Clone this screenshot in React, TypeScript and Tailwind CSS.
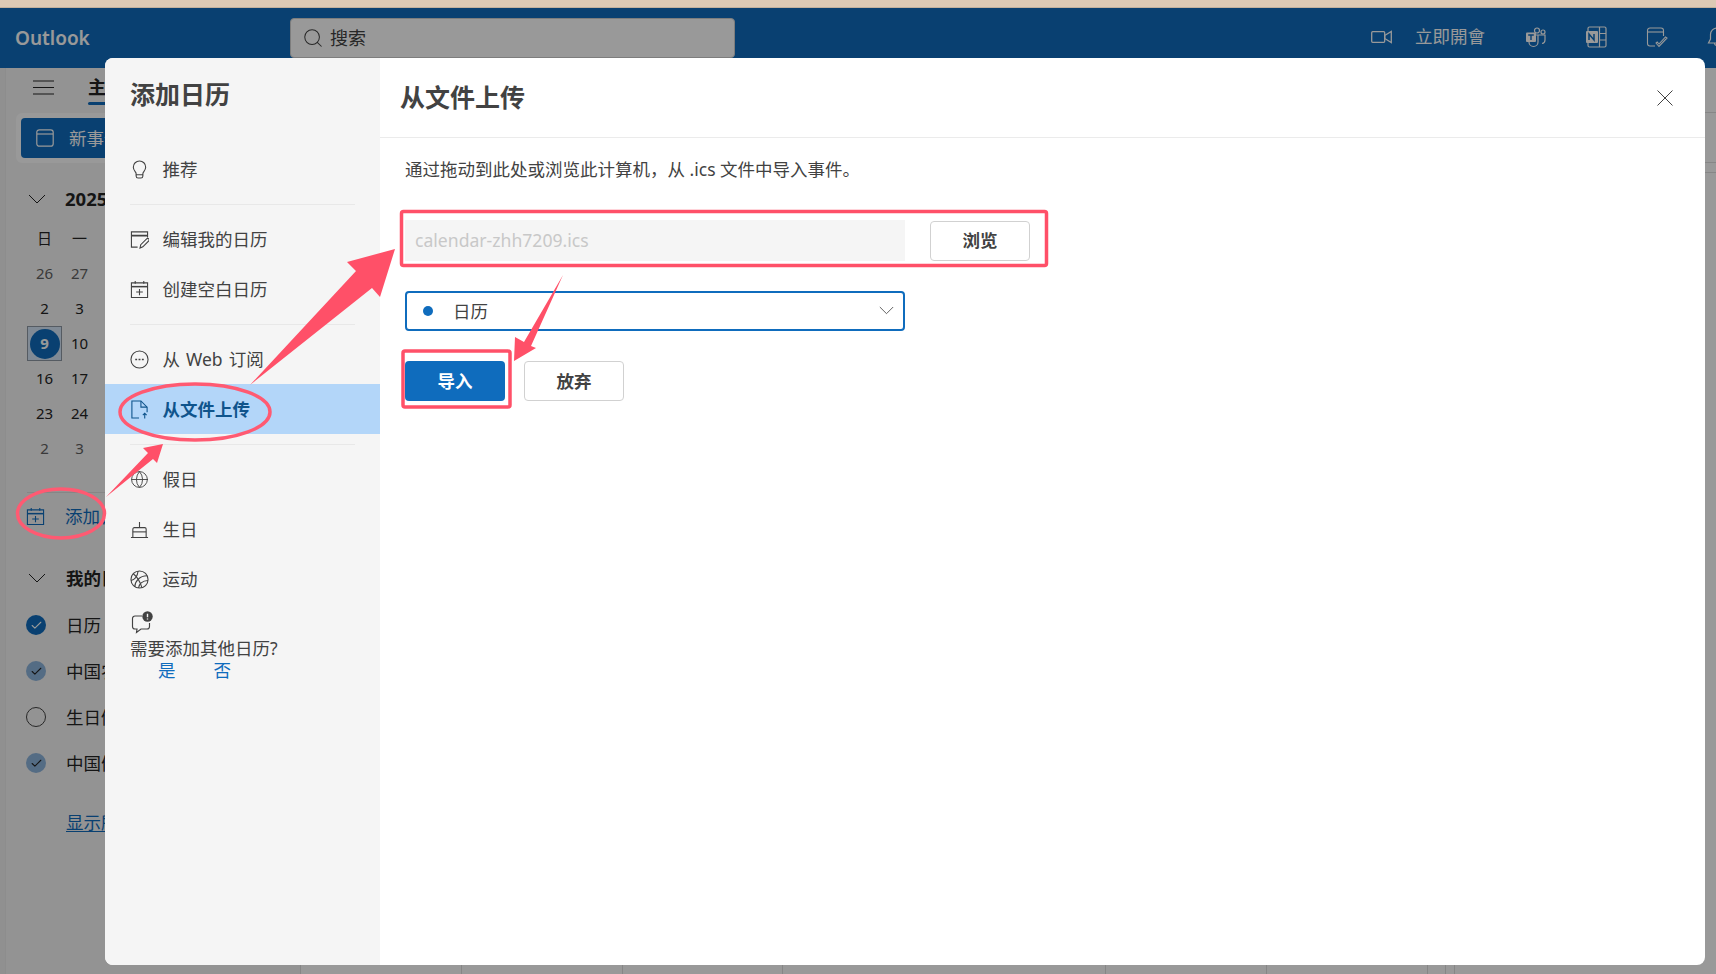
import React from "react";
import { Check, Search, Globe } from "lucide-react";

const FONT = "font-['Noto_Sans','Noto_Sans_CJK_SC',sans-serif]";

// --- Icônes dessinées ---
const IconProps = {
  width: 19,
  height: 19,
  viewBox: "0 0 20 20",
  fill: "none",
  stroke: "currentColor",
  strokeWidth: 1.15,
};

const Chevron = ({ width }: { width: number }) => (
  <svg width={width} height={width / 2 + 2} viewBox="0 0 18 11" fill="none" stroke="currentColor" strokeWidth={1}>
    <path d="M1 1l8 8 8-8" />
  </svg>
);

const Bulb = () => (
  <svg {...IconProps}>
    <path d="M10 1a6.500 6.500 0 0 0-6.500 6.500c0 2.500 1.500 4 2.500 5.500.5.800.5 1.500.5 2.500h7c0-1 0-1.700.5-2.500 1-1.500 2.500-3 2.500-5.500A6.500 6.500 0 0 0 10 1z" />
    <path d="M6.500 15.500V17a2 2 0 0 0 2 2h3a2 2 0 0 0 2-2v-1.500" />
  </svg>
);

const CalendarEdit = () => (
  <svg {...IconProps}>
    <path d="M8 18H1.500V2h17v6" />
    <path d="M1.500 6h17" strokeWidth={1.8} />
    <path d="M10.500 19l.8-3.500 6.200-6.200a1.500 1.500 0 0 1 2.200 2.200l-6.200 6.200z" />
  </svg>
);

const CalendarAdd = () => (
  <svg {...IconProps}>
    <path d="M1.500 3h17v15.500h-17z" />
    <path d="M1.500 7h17" strokeWidth={1.6} />
    <path d="M10 9.500v6.500M6.500 12.700h7M5.500 1v3M14.500 1v3" />
  </svg>
);

const WebSub = () => (
  <svg {...IconProps}>
    <circle cx="10" cy="10" r="9" />
    <path d="M5.500 10h2M9 10h2M12.500 10h2" strokeWidth={1.4} />
  </svg>
);

const FileUpload = () => (
  <svg {...IconProps}>
    <path d="M9.500 19H2V1h9.500L18 7.500V13" />
    <path d="M11.500 1v6.500H18" />
    <path d="M15.500 19.500v-5M13.500 16l2-2 2 2" />
  </svg>
);

const Cake = () => (
  <svg {...IconProps}>
    <path d="M10 2v5.500M1 18.500h18M3 18.500v-9a1.500 1.500 0 0 1 1.500-1.500h11a1.500 1.500 0 0 1 1.500 1.500v9" />
    <path d="M3 12.500h14" />
  </svg>
);

const Sports = () => (
  <svg {...IconProps}>
    <circle cx="10" cy="10" r="9" />
    <path d="M1 11c4-1 7-5 7.500-10M5 18c0-6 5-12 13-12M9 19c0-4 4-8 10-8" />
    <path d="M3.500 4c2.500 2 7 8 9 14.500" />
  </svg>
);

const ChatAlert = () => (
  <svg width="24" height="24" viewBox="0 0 24 24" fill="none" stroke="currentColor" strokeWidth={1.15}>
    <path d="M12 5H5a2.500 2.500 0 0 0-2.500 2.500v8A2.500 2.500 0 0 0 5 18h2l-.5 3.500L11 18h6a2.500 2.500 0 0 0 2.500-2.500V12" />
    <circle cx="17.500" cy="5.500" r="5.200" fill="currentColor" stroke="none" />
    <path d="M17.500 2.800v3.400M17.500 7.400v1.100" stroke="#f5f5f5" strokeWidth={1.4} />
  </svg>
);

const VideoCam = () => (
  <svg width="21" height="14" viewBox="0 0 21 14" fill="none" stroke="currentColor" strokeWidth={1.3}>
    <rect x="0.700" y="1.700" width="13" height="10.600" rx="1" />
    <path d="M13.700 5.500L20.300 1.500v11l-6.600-4z" />
  </svg>
);

const Teams = () => (
  <svg width="22" height="22" viewBox="0 0 22 22" fill="none" stroke="currentColor" strokeWidth={1.2}>
    <circle cx="12" cy="4.500" r="2.500" />
    <circle cx="18" cy="6" r="2" />
    <path d="M12 9h8v5a3.500 3.500 0 0 1-3 3.500M8 9h5v7a4.500 4.500 0 0 1-9 0" />
    <rect x="1" y="6.500" width="10" height="9.500" rx="1" fill="currentColor" stroke="none" />
    <path d="M3.200 9h5.600M6 9v5" stroke="#0f6cbd" strokeWidth={1.4} />
  </svg>
);

const OneNote = () => (
  <svg width="22" height="22" viewBox="0 0 22 22" fill="none" stroke="currentColor" strokeWidth={1.2}>
    <rect x="3" y="1" width="18" height="20" rx="1.500" />
    <path d="M14.500 1v20M14.500 7.500H21M14.500 14H21" />
    <rect x="1" y="5" width="12" height="12" rx="1" fill="currentColor" stroke="none" />
    <path d="M4 14V8l5 6V8" stroke="#0f6cbd" strokeWidth={1.5} />
  </svg>
);

const TodoCalendar = () => (
  <svg width="22" height="22" viewBox="0 0 22 22" fill="none" stroke="currentColor" strokeWidth={1.1}>
    <path d="M9 20H4a2.500 2.500 0 0 1-2.500-2.500v-13A2.500 2.500 0 0 1 4 2h11a2.500 2.500 0 0 1 2.500 2.500V10" />
    <path d="M1.500 6h16" />
    <path d="M10 17l3 3.500 8-8.500-1.500-1-6.500 7-1.800-2z" />
  </svg>
);

const Bell = () => (
  <svg width="22" height="22" viewBox="0 0 22 22" fill="none" stroke="currentColor" strokeWidth={1.2}>
    <path d="M11 2a6.500 6.500 0 0 0-6.500 6.500V13L2.500 17h17l-2-4V8.500A6.500 6.500 0 0 0 11 2z" />
    <path d="M8.500 17a2.500 2.500 0 0 0 5 0" />
  </svg>
);

// --- Données ---
const CALENDAR_WEEKS = [
  ["26", "27"],
  ["2", "3"],
  ["9", "10"],
  ["16", "17"],
  ["23", "24"],
  ["2", "3"],
];

const MY_CALENDARS = [
  { label: "日历", state: "on" },
  { label: "中国农历", state: "soft" },
  { label: "生日储存", state: "off" },
  { label: "中国假日", state: "soft" },
];

const NAV_GROUPS = [
  [{ icon: <Bulb />, label: "推荐" }],
  [
    { icon: <CalendarEdit />, label: "编辑我的日历" },
    { icon: <CalendarAdd />, label: "创建空白日历" },
  ],
  [
    { icon: <WebSub />, label: "从 Web 订阅" },
    { icon: <FileUpload />, label: "从文件上传", active: true },
  ],
  [
    { icon: <Globe size={19} strokeWidth={1.15} />, label: "假日" },
    { icon: <Cake />, label: "生日" },
    { icon: <Sports />, label: "运动" },
  ],
];

const Sidebar = () => (
  <aside className="w-[300px] shrink-0 bg-[#f5f5f5] flex">
    <div className="w-[6px] shrink-0 bg-[#f0f0f0] border-r border-[#ebebeb]" />
    <div className="flex-1 pr-4 text-[#242424]">
      <div className="h-[39px] mb-[6px] flex items-center pl-[27px] gap-[34px]">
        <svg width="21" height="15" viewBox="0 0 21 15" fill="none" stroke="currentColor" strokeWidth={1.2}>
          <path d="M0 1h21M0 7.500h21M0 14h21" />
        </svg>
        <div className="relative text-[18px] font-bold">
          主页
          <div className="absolute left-0 right-0 -bottom-[4px] h-[3px] rounded bg-[#0f6cbd]" />
        </div>
      </div>
      <div className="ml-[10px] h-[50px] w-[200px] rounded-md bg-white p-[5px]">
        <div className="h-full rounded bg-[#0f6cbd] flex items-center pl-[15px] gap-[15px] text-white text-[17.5px]">
          <svg width="18" height="18" viewBox="0 0 18 18" fill="none" stroke="currentColor" strokeWidth={1.2}>
            <rect x="0.800" y="0.800" width="16.400" height="16.400" rx="2.500" />
            <path d="M1 5h16" />
          </svg>
          新事件
        </div>
      </div>
      <div className="h-[36px] mt-[18px] flex items-center pl-[22px] gap-[19px]">
        <Chevron width={18} />
        <span className="text-[18.5px] font-bold">2025年2月</span>
      </div>
      <div className="ml-[21px] mt-[4px] grid grid-cols-[35px_35px] auto-rows-[35px] text-[15px] text-center">
        <div className="flex items-center justify-center">日</div>
        <div className="flex items-center justify-center">一</div>
        {CALENDAR_WEEKS.map((week, row) =>
          week.map((day, col) =>
            row === 2 && col === 0 ? (
              <div key="today" className="bg-[#d5e7f8] border border-[#242424]/40 flex items-center justify-center">
                <div className="w-[30px] h-[30px] rounded-full bg-[#0f6cbd] text-white font-bold flex items-center justify-center">
                  {day}
                </div>
              </div>
            ) : (
              <div
                key={`${row}-${col}`}
                className={`flex items-center justify-center ${row === 0 || row === 5 ? "text-[#616161]" : ""}`}
              >
                {day}
              </div>
            ),
          ),
        )}
      </div>
      <div className="ml-[21px] mt-[26px] border-t border-[#e0e0e0]" />
      <div className="h-[46px] flex items-center pl-[20px] gap-[20px] text-[#0f6cbd] text-[17.5px]">
        <CalendarAdd />
        添加日历
      </div>
      <div className="h-[40px] mt-[19px] flex items-center pl-[22px] gap-[20px]">
        <Chevron width={18} />
        <span className="text-[17.5px] font-bold">我的日历</span>
      </div>
      <div className="mt-[4px] flex flex-col">
        {MY_CALENDARS.map((cal) => (
          <div key={cal.label} className="h-[46px] flex items-center pl-[20px] gap-[20px] text-[17.5px]">
            {cal.state === "off" ? (
              <div className="w-5 h-5 rounded-full border border-[#424242]" />
            ) : (
              <div
                className={`w-5 h-5 rounded-full flex items-center justify-center ${cal.state === "on" ? "bg-[#0f6cbd] text-white" : "bg-[#8db4dc] text-[#242424]"}`}
              >
                <Check size={13} strokeWidth={2} />
              </div>
            )}
            {cal.label}
          </div>
        ))}
      </div>
      <div className="mt-[23px] pl-[60px] text-[#0f6cbd] text-[17.5px] underline underline-offset-2">显示所有</div>
    </div>
  </aside>
);

const CalendarGrid = () => (
  <main className="flex-1 bg-white flex flex-col">
    <div className="h-[45px] border-b border-[#e0e0e0]" />
    <div className="h-[50px] border-b border-[#e0e0e0]" />
    <div className="h-[10px] border-b border-[#e0e0e0]" />
    <div className="flex-1 flex border-l border-[#e0e0e0]">
      <div className="w-[161px] border-r border-[#e0e0e0]" />
      <div className="w-[161px] border-r border-[#e0e0e0]" />
      <div className="w-[160px] border-r border-[#e0e0e0]" />
      <div className="w-[323px] border-r border-[#e0e0e0]" />
      <div className="w-[161px] border-r border-[#e0e0e0]" />
      <div className="w-[161px] border-r border-[#e0e0e0]" />
      <div className="w-[18px] border-r border-[#e0e0e0]" />
      <div className="w-[9px] border-r border-[#e0e0e0]" />
    </div>
  </main>
);

const AppHeader = () => (
  <header className="h-[60px] shrink-0 bg-[#0f6cbd] text-white flex items-center overflow-hidden">
    <div className="w-[290px] shrink-0 pl-[15px] pt-[1px] text-[19px] font-semibold">Outlook</div>
    <div className="w-[445px] h-[40px] rounded bg-white text-[#424242] flex items-center pl-[11px] gap-[6px] text-[18px] border border-[#d1d1d1]">
      <Search size={22} strokeWidth={1.1} />
      搜索
    </div>
    <div className="ml-auto -mt-[3px] flex items-center -mr-[12px]">
      <VideoCam />
      <span className="ml-[23px] text-[17.5px]">立即開會</span>
      <div className="ml-[40px]"><Teams /></div>
      <div className="ml-[38px]"><OneNote /></div>
      <div className="ml-[39px]"><TodoCalendar /></div>
      <div className="ml-[38px]"><Bell /></div>
    </div>
  </header>
);

const Divider = () => <div className="mx-[25px] mt-[10px] mb-[9px] border-t border-[#e8e8e8]" />;

const AddCalendarDialog = () => (
  <div className="absolute z-20 left-[105px] top-[58px] w-[1600px] h-[907px] rounded-lg overflow-hidden flex bg-white">
    {/* NAVIGATION */}
    <div className="w-[275px] shrink-0 bg-[#f5f5f5] text-[#424242]">
      <h2 className="h-[86px] pl-[25px] pt-[17px] text-[25px] leading-[38px] font-bold">添加日历</h2>
      {NAV_GROUPS.map((group, i) => (
        <React.Fragment key={i}>
          {i > 0 && <Divider />}
          {group.map((item) => (
            <div
              key={item.label}
              className={`h-[50px] pl-[25px] flex items-center gap-[13.5px] text-[17.5px] [word-spacing:1.5px] ${item.active ? "bg-[#b3d6f9] text-[#0f548c] font-bold" : ""}`}
            >
              {item.icon}
              <span>{item.label}</span>
            </div>
          ))}
        </React.Fragment>
      ))}
      <div className="pl-[25px] pt-[7px]">
        <ChatAlert />
        <p className="text-[17.5px] leading-[24px] mt-[1px]">需要添加其他日历?</p>
        <div className="pl-[28px] flex gap-[38px] text-[17.5px] leading-[20px] text-[#0f6cbd]">
          <span>是</span>
          <span>否</span>
        </div>
      </div>
    </div>

    {/* CONTENU */}
    <div className="flex-1 min-w-0">
      <div className="h-[80px] border-b border-[#ebebeb] pl-[20px] pr-[24px] flex items-center justify-between text-[#424242]">
        <h1 className="text-[25px] font-bold">从文件上传</h1>
        <svg width="16" height="16" viewBox="0 0 16 16" fill="none" stroke="currentColor" strokeWidth={1} className="mr-[8px]">
          <path d="M0.500 0.500l15 15M15.500 0.500l-15 15" />
        </svg>
      </div>
      <div className="pl-[25px] pt-[18px] text-[#424242]">
        <p className="text-[17.5px] leading-[26px]">通过拖动到此处或浏览此计算机，从 .ics 文件中导入事件。</p>
        <div className="mt-[38px] flex items-center gap-[25px]">
          <div className="w-[500px] h-[41px] bg-[#f5f5f5] pl-[10px] flex items-center text-[17.6px] text-[#c8c8c8]">
            calendar-zhh7209.ics
          </div>
          <button className="w-[100px] h-[40px] rounded-sm border border-[#d1d1d1] text-[17.5px] font-bold">浏览</button>
        </div>
        <div className="mt-[30px] w-[500px] h-[40px] rounded-sm border-2 border-[#0f6cbd] flex items-center pl-[16px] pr-[9px]">
          <div className="w-[10px] h-[10px] rounded-full bg-[#0f6cbd]" />
          <span className="ml-[20px] text-[17.5px]">日历</span>
          <div className="ml-auto"><Chevron width={15} /></div>
        </div>
        <div className="mt-[30px] flex gap-[19px]">
          <button className="w-[100px] h-[40px] rounded-sm bg-[#0f6cbd] text-white text-[17.5px] font-bold">导入</button>
          <button className="w-[100px] h-[40px] rounded-sm border border-[#d1d1d1] text-[17.5px] font-bold">放弃</button>
        </div>
      </div>
    </div>
  </div>
);

// Annotations rouges posées sur la capture
const Annotations = () => (
  <svg className="absolute inset-0 z-30 pointer-events-none" width="1716" height="974" viewBox="0 0 1716 974" fill="none">
    <rect x="401.500" y="211.500" width="645" height="54" rx="2" stroke="#ff5068" strokeWidth="3.500" />
    <rect x="403" y="351" width="107" height="56" rx="2" stroke="#ff5068" strokeWidth="3.500" />
    <ellipse cx="195" cy="412" rx="75" ry="28" stroke="#ff5a72" strokeWidth="3.500" />
    <ellipse cx="61" cy="513.500" rx="43.500" ry="24.500" stroke="#ff5a72" strokeWidth="3.500" />
    <polygon points="250,385 356,271 347,262 395,249 380,297 372,288" fill="#ff5068" />
    <polygon points="106,497 148,453 143,448 163,444 157,463 153,459" fill="#ff5068" />
    <polygon points="563,275 531,346 536,348 514,361 515,337 524,342" fill="#ff5068" />
  </svg>
);

export default function App() {
  return (
    <div className={`relative w-[1716px] h-[974px] overflow-hidden bg-white flex flex-col ${FONT}`}>
      <div className="h-[8px] shrink-0 bg-[#dcc9b5] border-b border-[#c2b09d]" />
      <AppHeader />
      <div className="flex-1 flex min-h-0">
        <Sidebar />
        <CalendarGrid />
      </div>
      {/* voile de la modale */}
      <div className="absolute z-10 inset-x-0 top-[8px] bottom-0 bg-black/40" />
      <AddCalendarDialog />
      <Annotations />
    </div>
  );
}
